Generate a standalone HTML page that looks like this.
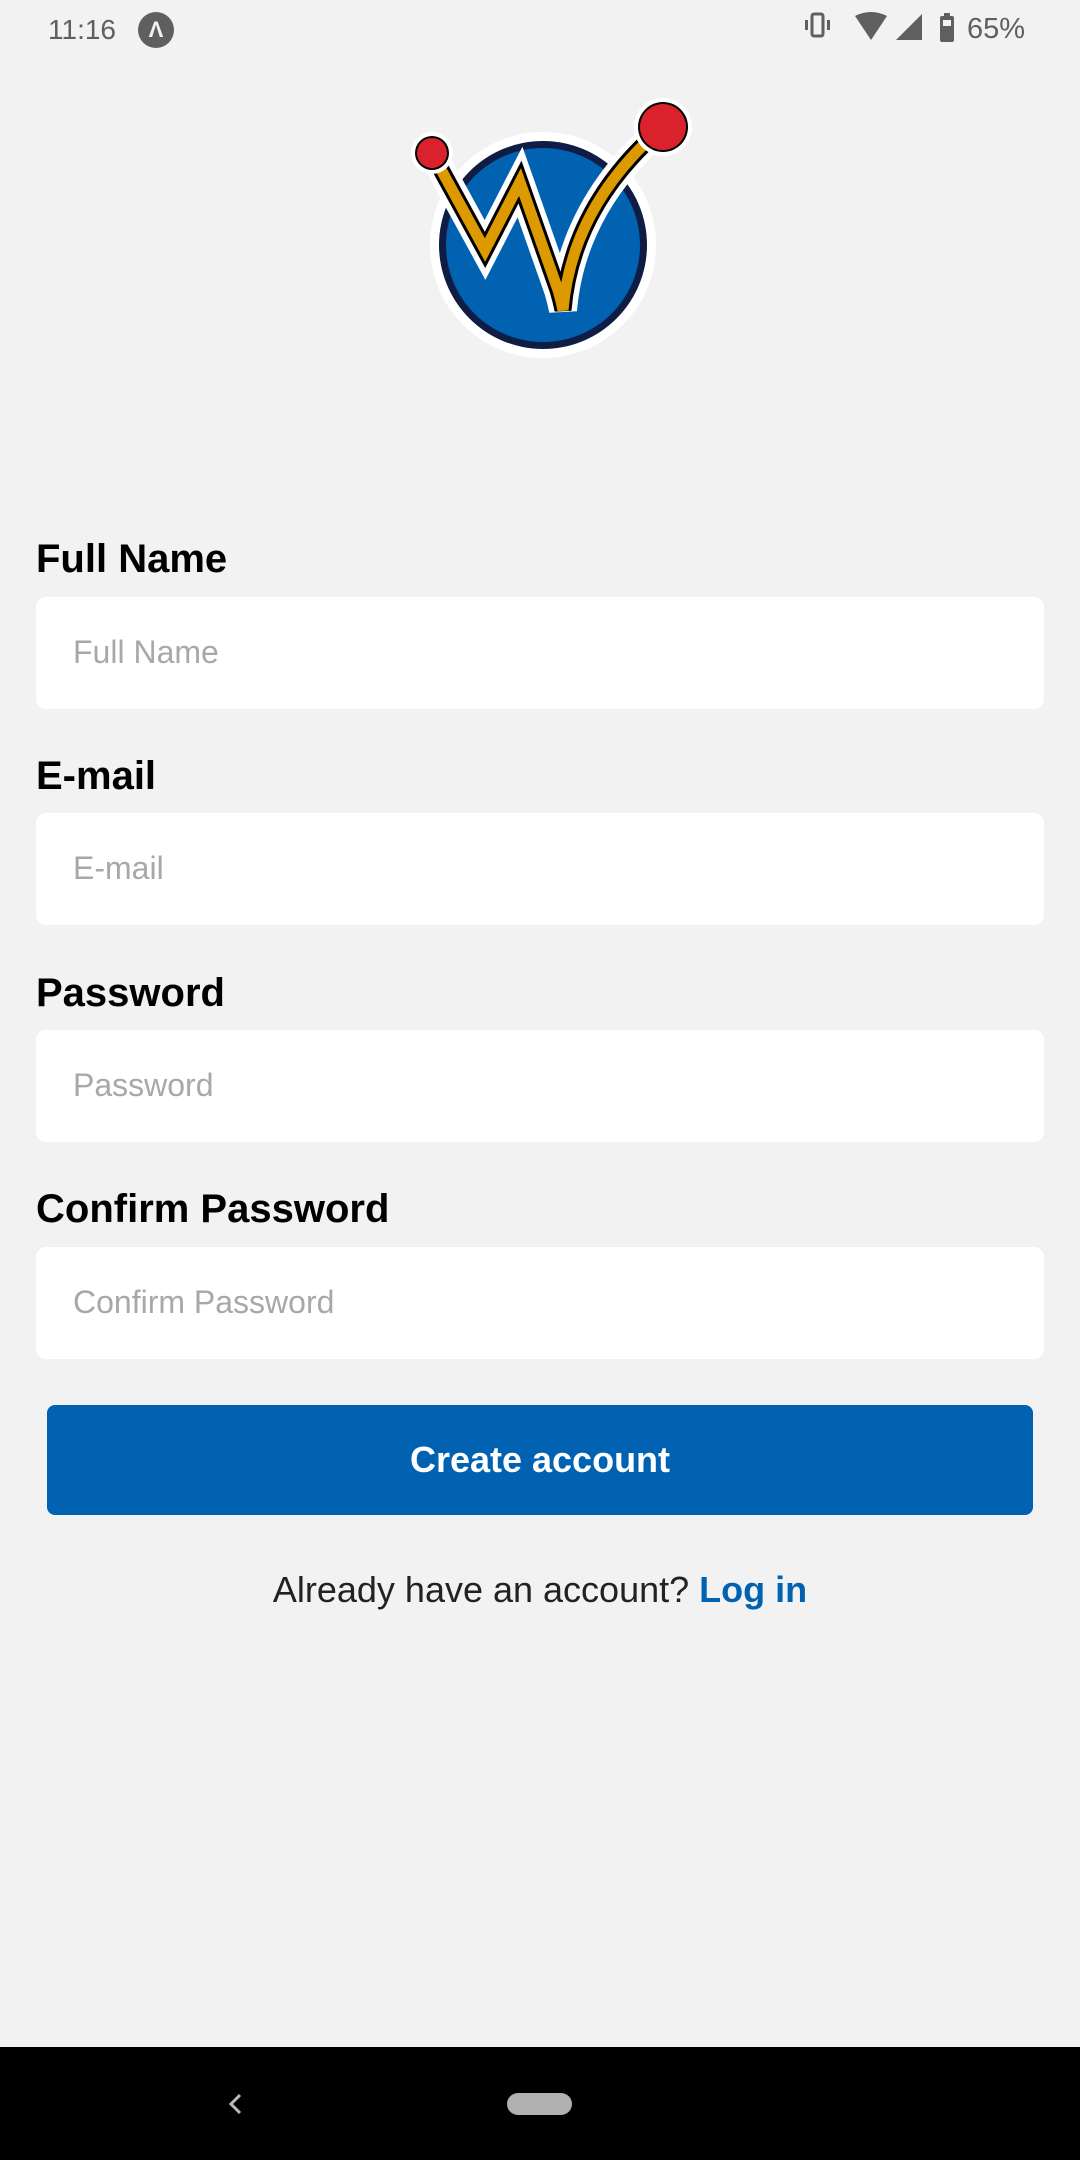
<!DOCTYPE html>
<html><head><meta charset="utf-8"><style>
body{margin:0;width:1080px;height:2160px;background:#f2f2f2;font-family:"Liberation Sans",Roboto,sans-serif;position:relative;overflow:hidden}
.a{position:absolute}
.lbl{position:absolute;left:36px;font-weight:bold;font-size:40px;color:#000;line-height:1}
.in{position:absolute;left:36px;width:1008px;height:112px;background:#fff;border-radius:10px}
.in span{position:absolute;left:37px;top:39px;font-size:32px;color:#a8a8a8;line-height:1}
</style></head><body>
<div class="a" style="left:48px;top:14px;font-size:28px;color:#5f5f5f">11:16</div>
<div class="a" style="left:138px;top:12px;width:36px;height:36px;border-radius:50%;background:#5f5f5f;color:#f2f2f2;font-size:22px;text-align:center;line-height:36px;font-weight:bold">Λ</div>
<svg class="a" style="left:800px;top:10px" width="240" height="40">
<rect x="12" y="4" width="11" height="22" rx="2" fill="none" stroke="#5f5f5f" stroke-width="3"/>
<rect x="5" y="10" width="3" height="10" fill="#5f5f5f"/><rect x="27" y="10" width="3" height="10" fill="#5f5f5f"/>
<path d="M55 6 Q71 -2 87 6 L71 30 Z" fill="#5f5f5f"/>
<path d="M96 30 L122 4 L122 30 Z" fill="#5f5f5f"/>
<rect x="140" y="6" width="14" height="26" rx="2" fill="#5f5f5f"/><rect x="144" y="3" width="6" height="4" fill="#5f5f5f"/><rect x="143" y="10" width="8" height="6" fill="#f2f2f2"/>
</svg>
<div class="a" style="left:967px;top:13px;font-size:29px;color:#5f5f5f">65%</div>

<svg class="a" style="left:0;top:0" width="1080" height="400">
<circle cx="543" cy="245" r="113" fill="#fff"/>
<circle cx="543" cy="245" r="104" fill="#0f1d45"/>
<circle cx="543" cy="245" r="97" fill="#0062b1"/>
<g fill="none" stroke-linejoin="miter" stroke-linecap="round">
<path d="M432 153 L485 250 L520 182 L558 290 Q561 300 563 310 Q572 205 663 127" stroke="#fff" stroke-width="28"/>
<path d="M432 153 L485 250 L520 182 L558 290 Q561 300 563 310 Q572 205 663 127" stroke="#000" stroke-width="17"/>
<path d="M432 153 L485 250 L520 182 L558 290 Q561 300 563 310 Q572 205 663 127" stroke="#dc9a00" stroke-width="11"/>
</g>
<circle cx="432" cy="153" r="21" fill="#fff"/><circle cx="432" cy="153" r="17" fill="#000"/><circle cx="432" cy="153" r="15" fill="#d9222c"/>
<circle cx="663" cy="127" r="29" fill="#fff"/><circle cx="663" cy="127" r="25" fill="#000"/><circle cx="663" cy="127" r="23" fill="#d9222c"/>
</svg>

<div class="lbl" style="top:539px">Full Name</div>
<div class="in" style="top:597px"><span>Full Name</span></div>
<div class="lbl" style="top:756px">E-mail</div>
<div class="in" style="top:813px"><span>E-mail</span></div>
<div class="lbl" style="top:973px">Password</div>
<div class="in" style="top:1030px"><span>Password</span></div>
<div class="lbl" style="top:1189px">Confirm Password</div>
<div class="in" style="top:1247px"><span>Confirm Password</span></div>

<div class="a" style="left:47px;top:1405px;width:986px;height:110px;background:#0062b1;border-radius:8px;color:#fff;font-weight:bold;font-size:36px;text-align:center;line-height:110px">Create account</div>
<div class="a" style="left:0;width:1080px;top:1569px;text-align:center;font-size:36px;color:#222">Already have an account? <b style="color:#0062b1">Log in</b></div>

<div class="a" style="left:0;top:2047px;width:1080px;height:113px;background:#000"></div>
<svg class="a" style="left:224px;top:2092px" width="24" height="24"><path d="M16 3 L7 12 L16 21" fill="none" stroke="#bbb" stroke-width="3"/></svg>
<div class="a" style="left:507px;top:2093px;width:65px;height:22px;border-radius:11px;background:#b0b0b0"></div>
</body></html>
